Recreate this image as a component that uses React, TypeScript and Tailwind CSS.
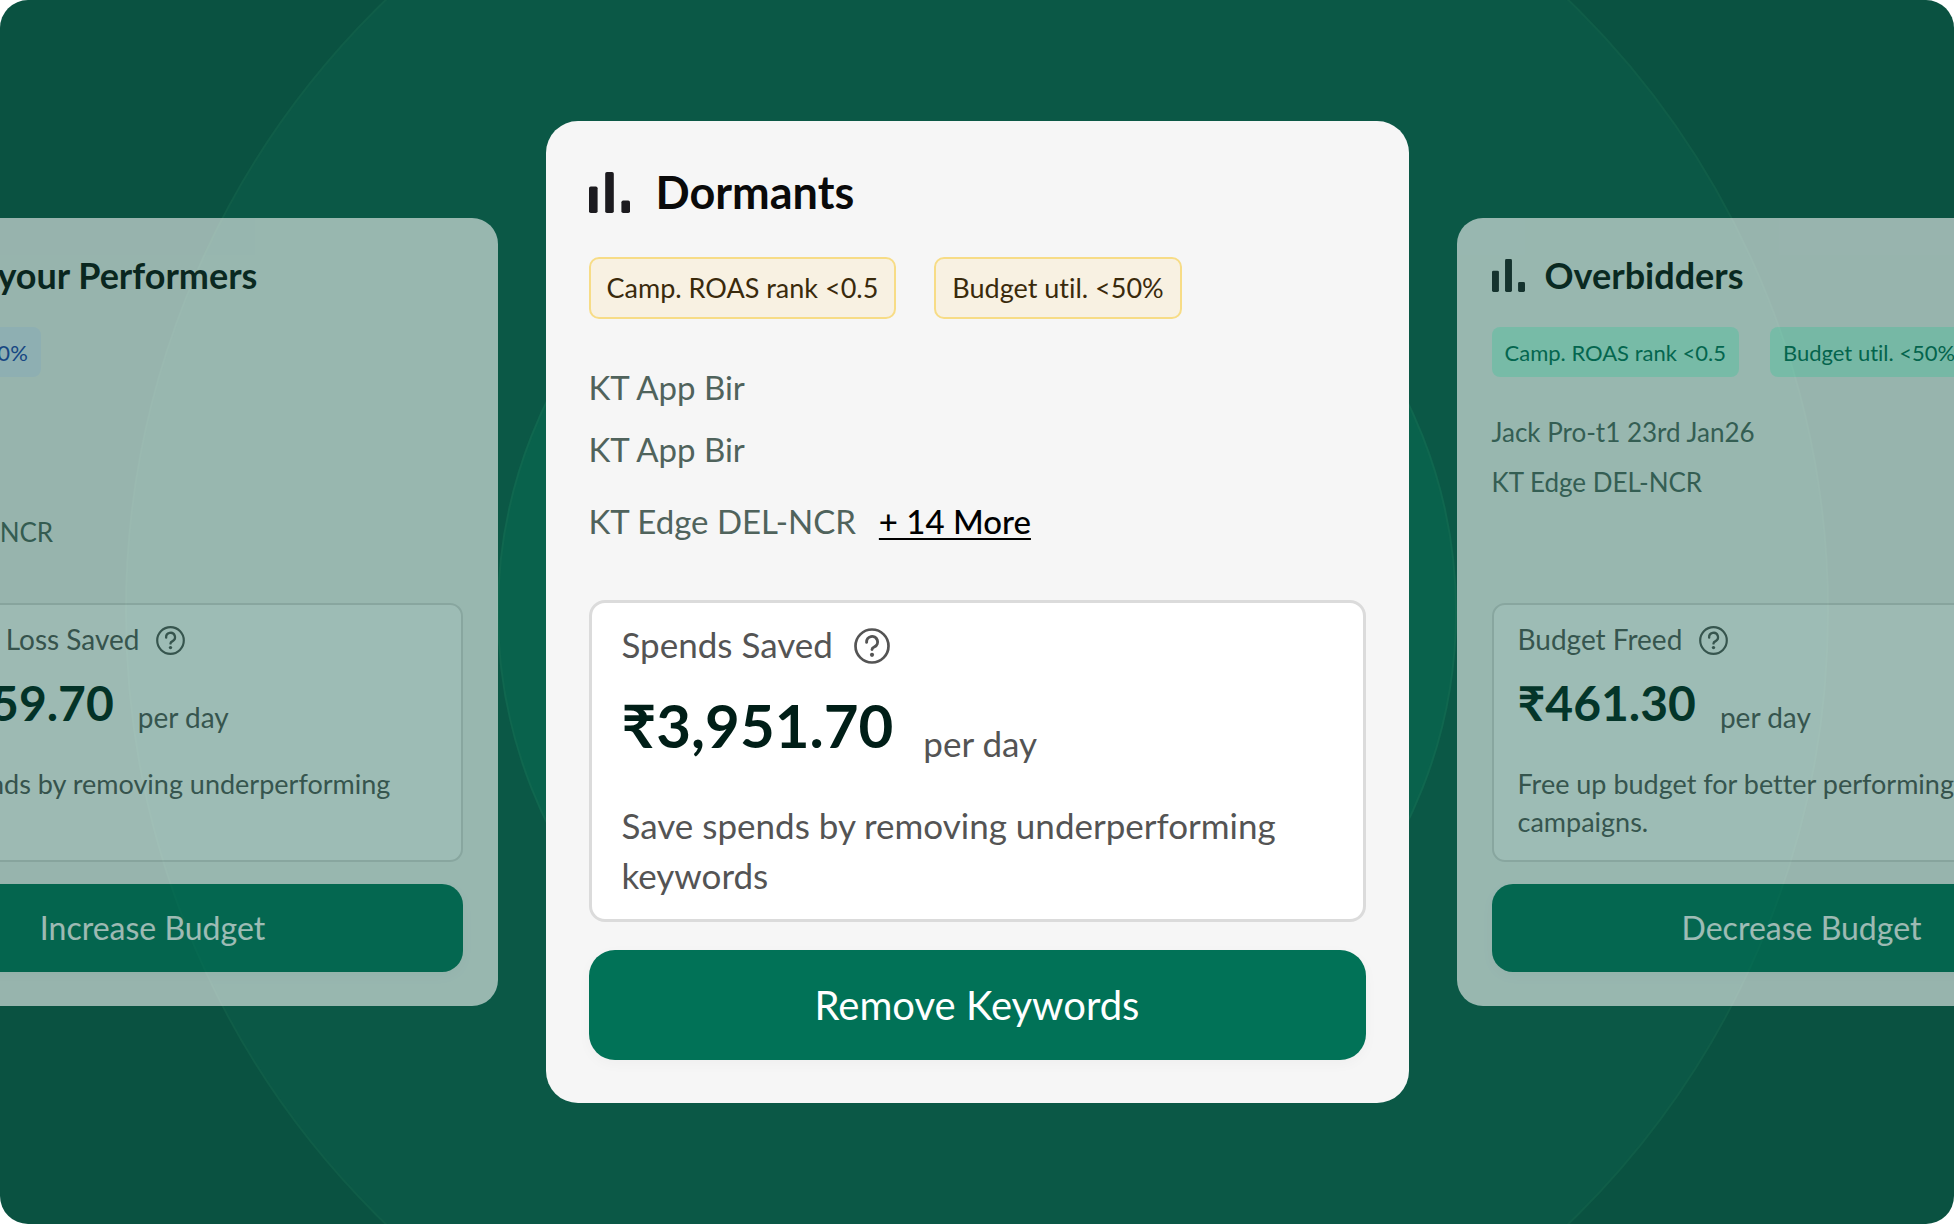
import clsx from "clsx";

type Size = "lg" | "sm";
type Tone = "amber" | "green" | "blue";

type Insight = {
  title: string;
  tone: Tone;
  tags: string[];
  campaigns: string[];
  more?: string;
  metric: string;
  amount: string;
  description: string;
  action: string;
};

const insights: Insight[] = [
  {
    title: "Boost your Performers",
    tone: "blue",
    tags: ["Budget util. >90%"],
    campaigns: ["KT App Bir", "KT App Bir", "KT Edge DEL-NCR"],
    metric: "Unrealised Loss Saved",
    amount: "₹12,459.70",
    description: "Lower spends by removing underperforming keywords",
    action: "Increase Budget",
  },
  {
    title: "Dormants",
    tone: "amber",
    tags: ["Camp. ROAS rank <0.5", "Budget util. <50%"],
    campaigns: ["KT App Bir", "KT App Bir", "KT Edge DEL-NCR"],
    more: "+ 14 More",
    metric: "Spends Saved",
    amount: "₹3,951.70",
    description: "Save spends by removing underperforming keywords",
    action: "Remove Keywords",
  },
  {
    title: "Overbidders",
    tone: "green",
    tags: ["Camp. ROAS rank <0.5", "Budget util. <50%"],
    campaigns: ["Jack Pro-t1 23rd Jan26", "KT Edge DEL-NCR"],
    metric: "Budget Freed",
    amount: "₹461.30",
    description: "Free up budget for better performing campaigns.",
    action: "Decrease Budget",
  },
];

const tones = {
  amber: "border-2 border-[#f7dc86] bg-[#f8f1e2] text-[#3a2a0c]",
  green: "bg-[#bffde8] text-[#017055]",
  blue: "bg-[#e6edfd] text-[#1e40af]",
};

const styles = {
  lg: {
    card: "w-[863px] rounded-[32px] p-[43px]",
    header: "gap-[26px] text-[45px] leading-[56px]",
    bars: "size-[41px]",
    tags: "mt-[37px] gap-[38px]",
    tag: "h-[62px] rounded-[10px] px-4 text-[27px]",
    list: "mt-[37px] min-h-[244px] text-[33px] leading-[62px]",
    box: "rounded-2xl border-[3px] px-[30px] pt-4 pb-[19px]",
    metric: "gap-[21px] text-[35px] leading-[50px]",
    help: "mt-1 size-9",
    amountRow: "mt-[13px] gap-[30px]",
    amount: "text-[60px] leading-[86px]",
    period: "text-[35px] leading-[50px]",
    description: "mt-8 text-[35px] leading-[50px]",
    button: "mt-7 h-[110px] rounded-[26px] text-[40px]",
  },
  sm: {
    card: "w-[690px] rounded-[26px] px-[35px] pt-[35px] pb-[34px] opacity-60",
    header: "gap-5 text-[36px] leading-[45px]",
    bars: "size-[33px]",
    tags: "mt-[29px] gap-[31px]",
    tag: "h-[50px] rounded-lg px-[13px] text-[22px]",
    list: "mt-[30px] min-h-[196px] text-[26px] leading-[50px]",
    box: "rounded-[13px] border-2 px-6 pt-[14px] pb-[19px]",
    metric: "gap-[17px] text-[28px] leading-[40px]",
    help: "mt-0.5 size-[29px]",
    amountRow: "mt-[9px] gap-6",
    amount: "text-[48px] leading-[69px]",
    period: "text-[28px] leading-[40px]",
    description: "mt-7 text-[27px] leading-[38px]",
    button: "mt-[22px] h-[88px] rounded-[21px] text-[32px]",
  },
};

function BarsIcon({ className }: { className: string }) {
  return (
    <svg viewBox="0 0 41 41" className={className} fill="#1c1b1f" aria-hidden="true">
      <rect x="0" y="14.5" width="8.6" height="26.5" rx="1.8" />
      <rect x="16.2" y="0" width="8.6" height="41" rx="1.8" />
      <rect x="32.4" y="28.5" width="8.6" height="12.5" rx="1.8" />
    </svg>
  );
}

function HelpIcon({ className }: { className: string }) {
  return (
    <svg viewBox="0 0 36 36" className={className} fill="none" stroke="currentColor" strokeLinecap="round" aria-hidden="true">
      <circle cx="18" cy="18" r="16.5" strokeWidth="2.7" />
      <path d="M12.6 14.4A5.5 5.5 0 1 1 20.6 18.8C18.8 19.7 18 20.2 18 21.6" strokeWidth="2.9" />
      <circle cx="18" cy="26.8" r="2.1" fill="currentColor" stroke="none" />
    </svg>
  );
}

function InsightCard({ insight, size }: { insight: Insight; size: Size }) {
  const s = styles[size];

  return (
    <article className={clsx("relative shrink-0 bg-[#f6f6f6]", s.card)}>
      {/* Title */}
      <h2 className={clsx("flex items-center font-bold text-[#0a0a0a] whitespace-nowrap", s.header)}>
        <BarsIcon className={s.bars} />
        {insight.title}
      </h2>

      {/* Tags */}
      <div className={clsx("flex", s.tags)}>
        {insight.tags.map((tag) => (
          <span key={tag} className={clsx("flex items-center whitespace-nowrap", tones[insight.tone], s.tag)}>
            {tag}
          </span>
        ))}
      </div>

      {/* Campaigns */}
      <ul className={clsx("text-[#50635c]", s.list)}>
        {insight.campaigns.map((name, i) => {
          const last = i === insight.campaigns.length - 1;
          return last && insight.more ? (
            <li key={i} className="flex gap-[23px] leading-[82px]">
              {name}
              <a href="#more" className="font-medium text-black underline decoration-2 underline-offset-4">
                {insight.more}
              </a>
            </li>
          ) : (
            <li key={i}>{name}</li>
          );
        })}
      </ul>

      {/* Savings */}
      <div className={clsx("border-[#dbdbdb] bg-white text-[#545454]", s.box)}>
        <div className={clsx("flex items-center whitespace-nowrap", s.metric)}>
          {insight.metric}
          <HelpIcon className={s.help} />
        </div>
        <div className={clsx("flex items-end whitespace-nowrap", s.amountRow)}>
          <strong className={clsx("font-bold text-[#001e17]", s.amount)}>{insight.amount}</strong>
          <span className={s.period}>per day</span>
        </div>
        <p className={s.description}>{insight.description}</p>
      </div>

      {/* Action */}
      <button
        type="button"
        className={clsx("w-full bg-[#017257] text-white shadow-[0_4px_14px_rgba(0,0,0,0.03)]", s.button)}
      >
        {insight.action}
      </button>
    </article>
  );
}

export default function App() {
  return (
    <main className="relative flex min-h-screen items-center justify-center gap-12 overflow-hidden rounded-[28px] bg-[#0a5241] font-['Lato','Noto_Sans',sans-serif] [font-variant-ligatures:none]">
      {/* Background rings */}
      <div className="absolute top-1/2 left-1/2 size-[1704px] -translate-1/2 rounded-full border-2 border-[#105d48] bg-[#0b5846]" />
      <div className="absolute top-1/2 left-1/2 size-[960px] -translate-1/2 rounded-full border-2 border-[#10674f] bg-[#09624c]" />

      {insights.map((insight) => (
        <InsightCard key={insight.title} insight={insight} size={insight.tone === "amber" ? "lg" : "sm"} />
      ))}
    </main>
  );
}
